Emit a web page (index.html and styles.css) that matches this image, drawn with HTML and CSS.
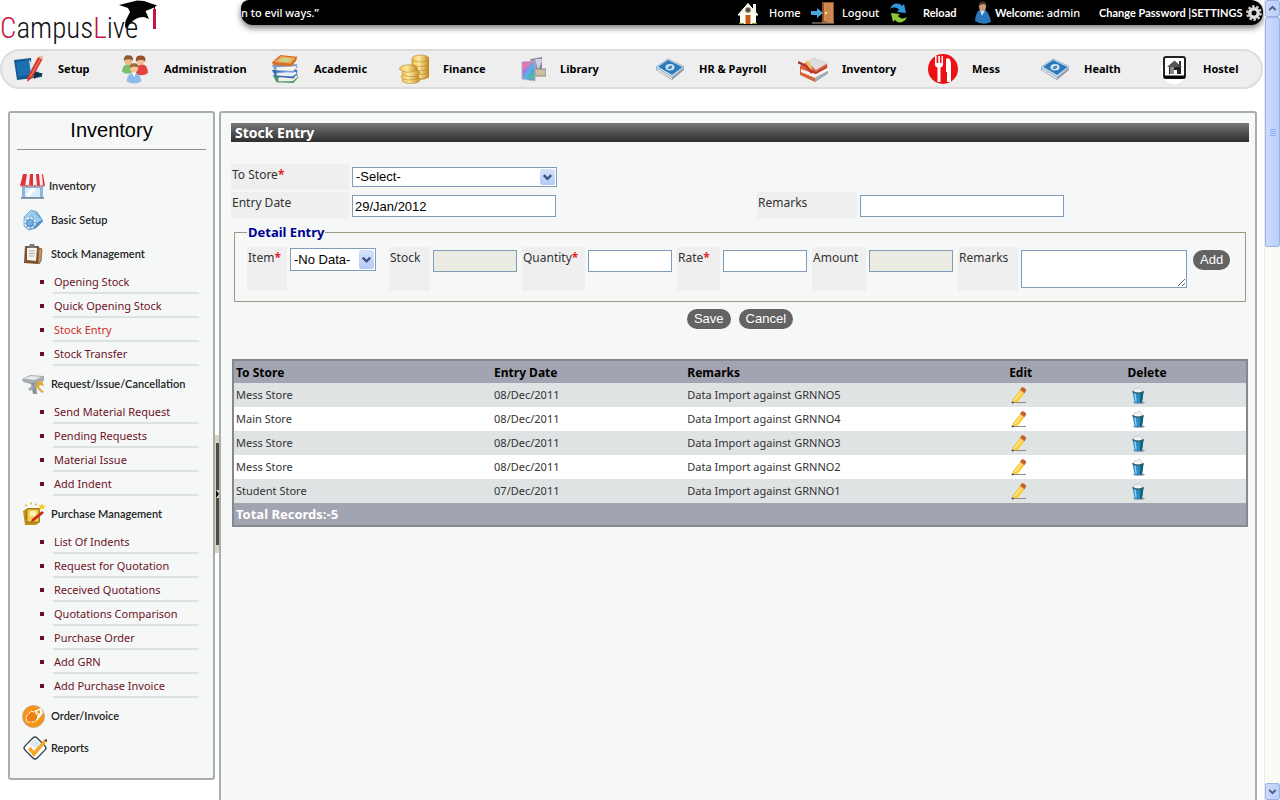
FILE: index.html
```html
<!DOCTYPE html>
<html lang="en">
<head>
<meta charset="utf-8">
<title>CampusLive - Stock Entry</title>
<link rel="stylesheet" href="styles.css">
</head>
<body>
<svg class="defs" aria-hidden="true">
  <defs>
    <linearGradient id="gold" x1="0" x2="1" y1="0" y2="0"><stop offset="0" stop-color="#f2c24a"/><stop offset=".4" stop-color="#ffe9a0"/><stop offset="1" stop-color="#c58a1c"/></linearGradient>
    <linearGradient id="rainbow" x1="0" x2="1" y1="0" y2="1"><stop offset="0" stop-color="#ef4f9e"/><stop offset=".3" stop-color="#b76ae8"/><stop offset=".55" stop-color="#4fb8dd"/><stop offset=".8" stop-color="#5f7fe0"/><stop offset="1" stop-color="#b45fd8"/></linearGradient>
    <linearGradient id="water" x1="0" x2="1" y1="0" y2="1"><stop offset="0" stop-color="#cde5f7"/><stop offset=".5" stop-color="#6fb0e0"/><stop offset="1" stop-color="#2a6db0"/></linearGradient>
  </defs>
  <symbol id="i-cash" viewBox="0 0 30 22">
    <path d="M1 10 17 19.500 29 9.500 29 12 17 22 1 12z" fill="#8c9aa8"/>
    <path d="M1 9 13 1 29 8.500 17 18.500z" fill="#e9f3fa" stroke="#7ba4c4" stroke-width=".8"/>
    <path d="M3 8.800 13 2 27.500 9 17 17z" fill="#2e79b8"/>
    <ellipse cx="15" cy="9.300" rx="4.500" ry="3.200" fill="#cfe3f2"/>
    <path d="M12.500 11c.5-2 2-3.600 4-3.200 1.500.5.500 2-.5 3z" fill="#3f85bd"/>
    <path d="M2 11.500 17 20.500" stroke="#fff" stroke-width="1"/>
  </symbol>
  <symbol id="i-pencil" viewBox="0 0 16 18">
    <path d="M3 16.500h12" stroke="#8c8c8c" stroke-width="1"/>
    <path d="M2 13 9 4l4.500 3.200L7 15.500 1 17z" fill="#fbc93a"/>
    <path d="M4 14 11 5.200" stroke="#fff0a0" stroke-width="1.300"/>
    <path d="M9 4 10.500 1.600c1-1.200 5.600 1.300 4.500 3.200L13.500 7.200z" fill="#c4602a"/>
    <path d="M.8 15.200 3.600 16.700.8 17.600z" fill="#333"/>
  </symbol>
  <symbol id="i-bin" viewBox="0 0 14 18">
    <ellipse cx="8" cy="16.600" rx="6" ry="1.200" fill="#8a9aa0"/>
    <path d="M1.500 5.500h11l-1.500 11Q7 18 3.500 16.500z" fill="#2b8cc4"/>
    <path d="M9.500 6h3L11 16.500 9 17z" fill="#175c72"/>
    <path d="M4 7.500 5 15.500" stroke="#8fd0f2" stroke-width="1.500"/>
    <path d="M2 5.500 4 2.500 6 3 8 .8 10 3.500 12 5.500 9 7 5 7z" fill="#f2f4f5" stroke="#9aa" stroke-width=".5"/>
    <path d="M1.500 5.500Q7 8.800 12.500 5.500" fill="none" stroke="#1b5260" stroke-width="1.100"/>
  </symbol>
</svg>

<div class="app">
  <header class="header">
    <a class="logo" href="#" aria-label="CampusLive">
      <span class="logo-text"><b>C</b>ampus<b>L</b>ive</span>
      <svg class="logo-cap" viewBox="0 0 40 30" aria-hidden="true">
        <path d="M0 5 18 .5 25 1 38 5.500 34 8 26.500 11 30 19 25 17Q18 17 14 21 10 24 7 29 5 25 7 20L11 12 9 8z" fill="#050505"/>
        <path d="M35.500 6v4" stroke="#111" stroke-width="1"/>
        <path d="M35.500 9v20" stroke="#c21540" stroke-width="3"/>
      </svg>
    </a>
    <div class="topbar">
      <span class="quote">n to evil ways.”</span>
      <a class="top-link home" href="#">
        <svg width="20" height="22" viewBox="0 0 20 22" aria-hidden="true"><path d="M15 2h3v8h-3z" fill="#eee"/><path d="M2 11h16v11H2z" fill="#fffdf2"/><path d="M0 13 10 1.500 20 13z" fill="#fdf8e6" stroke="#fff" stroke-width="1"/><circle cx="10" cy="8" r="2.700" fill="#55483e" stroke="#b7a894"/><path d="M7.500 13h5v9h-5z" fill="#c65a1c"/><path d="M1 21.500h5M14 21.500h5" stroke="#6ea034"/></svg>
        <span>Home</span></a>
      <a class="top-link logout" href="#">
        <svg width="24" height="23" viewBox="0 0 24 23" aria-hidden="true"><path d="M11 1h12v21H11z" fill="#8f5228"/><path d="M13 2h9v20l-9-2z" fill="#d48b55"/><path d="M15 4h5v6h-5zM15 13h5v6h-5z" fill="#cb8450"/><circle cx="15" cy="12" r="1.200" fill="#f6e18a"/><path d="M0 10h6V7l6 5-6 5v-3H0z" fill="#4ba5de"/><path d="M1 22h22" stroke="#b9a28a"/></svg>
        <span>Logout</span></a>
      <a class="top-link reload" href="#">
        <svg width="17" height="20" viewBox="0 0 17 20" aria-hidden="true"><path d="M0 6C2 0 9-1 12 3l2-2 2 9-9-1 2-2C7 4 3 4 0 6z" fill="#3397dc"/><path d="M17 14c-2 6-9 7-12 3l-2 2-2-9 9 1-2 2c2 3 6 3 9 1z" fill="#8cc63c"/></svg>
        <span>Reload</span></a>
      <span class="welcome">
        <svg width="16" height="23" viewBox="0 0 16 23" aria-hidden="true"><path d="M0 20Q1 10 5 9l5 0Q14 11 16 21 8 25 0 20z" fill="#2c78bd"/><path d="M5 9 7 15 10 9z" fill="#cfe3f5"/><ellipse cx="7.500" cy="5.500" rx="3.500" ry="4.500" fill="#c99a78"/><path d="M3.500 5C3-1 12-1 11.500 5 9 2 7 3 3.500 5z" fill="#4a332a"/></svg>
        <span><strong>Welcome:</strong> admin</span></span>
      <span class="account"><span><a href="#">Change Password</a> |<a href="#">SETTINGS</a></span>
        <svg width="16" height="16" viewBox="0 0 16 16" aria-hidden="true"><circle cx="8" cy="8" r="6.700" fill="none" stroke="#c4c4c4" stroke-width="2.400" stroke-dasharray="2.600 1.600"/><circle cx="8" cy="8" r="4.200" fill="none" stroke="#dcdcdc" stroke-width="3.400"/></svg></span>
    </div>
  </header>

  <nav class="modules" aria-label="Modules">
    <a href="#"><svg viewBox="0 0 30 30" aria-hidden="true"><path d="M0 6 17 4 18 19 28 19v4L3 26z" fill="#15598f"/><path d="M2 8 16 6 17 20 4 23z" fill="#1c70b0"/><path d="M15 6 27 18 20 24 17 20z" fill="#d7e3ef"/><path d="M18 16 29 20 20 25z" fill="#12314d"/><path d="M24 3 28.500 5.500 18 24 13 28 14 22z" fill="#d8392b"/><path d="M24 3Q27 0 29.500 3L28.500 5.500z" fill="#eeb9a0"/><path d="M26 5.500 16 23" stroke="#f48770" stroke-width="1"/></svg>Setup</a>
    <a href="#"><svg viewBox="0 0 30 32" aria-hidden="true"><path d="M1 19Q2 11 7 11q5 0 6 8-6 4-12 0z" fill="#7cbf6a"/><circle cx="8" cy="7" r="4.500" fill="#e9b98c"/><path d="M3 7Q3 1 8 1.500 13 1 13 7 9 4 3 7z" fill="#8a5a32"/><path d="M16 21Q17 11 22 11q6 0 7 9-6 5-13 1z" fill="#e2433e"/><circle cx="21" cy="7" r="4.500" fill="#f0c096"/><path d="M16 8Q15 1 21 1.500 27 1 26 8 22 4 16 8z" fill="#9a4f28"/><path d="M6 29Q7 20 14 20q6 0 8 9-8 5-16 0z" fill="#8fbbea"/><path d="M12 20l2 5 2-5z" fill="#fff"/><circle cx="14" cy="15" r="4.600" fill="#f3c79e"/><path d="M9 15Q9 9.500 14 10q5-.5 5 5-4-3-10 0z" fill="#a46a38"/></svg>Administration</a>
    <a href="#"><svg viewBox="0 0 30 32" aria-hidden="true"><path d="M2 23 6 30 24 31 29 25 28 21 8 21z" fill="#46976a"/><path d="M8 25l20-2v2l-5 4-15 0z" fill="#f2efe6"/><path d="M1 17 5 24 24 26 28 20 28 17 8 16z" fill="#3267b2"/><path d="M6 20l21-1v2l-4 3-17-1z" fill="#e6eef6"/><path d="M1 12 5 18 24 20 28 14 28 11 8 10z" fill="#7e9fd0"/><path d="M6 14l21-1v2l-4 3-17-1z" fill="#f5f5ef"/><path d="M1 9 10 1 28 3 27 7 22 13 3 12z" fill="#d5702a"/><path d="M4 8.500 11 2.500 26 4 21 10z" fill="#f3a85b"/><path d="M8 7.500 13 4 22 5 18.500 8.500z" fill="#b8dc8b"/></svg>Academic</a>
    <a href="#"><svg viewBox="0 0 30 30" aria-hidden="true"><g stroke="#b5822a" stroke-width=".6" fill="url(#gold)"><path d="M13 5v18q8 5 17 0V4z"/><ellipse cx="21.500" cy="21" rx="8.500" ry="3.500"/><ellipse cx="21.500" cy="17" rx="8.500" ry="3.500"/><ellipse cx="21.500" cy="13" rx="8.500" ry="3.500"/><ellipse cx="21.500" cy="9" rx="8.500" ry="3.500"/><ellipse cx="21.500" cy="4.500" rx="8.500" ry="3.500"/><ellipse cx="12" cy="26" rx="9" ry="3.500"/><ellipse cx="11" cy="22.500" rx="9" ry="3.500"/><ellipse cx="12" cy="19" rx="9" ry="3.500"/><ellipse cx="9.500" cy="14.500" rx="9" ry="3.700"/></g></svg>Finance</a>
    <a href="#"><svg viewBox="0 0 30 30" aria-hidden="true"><path d="M15 5 26 3v15l-7 3z" fill="#8e86a6"/><path d="M19 5 27 5 22 16z" fill="#d5cfe6"/><path d="M15 5v12" stroke="#9b6c5a"/><path d="M19 15h11v7H19z" fill="#cdbf9f" stroke="#8d8575"/><path d="M6 8 19 7v20L6 25z" fill="url(#rainbow)" stroke="#b9b4c8"/><path d="M7 9 18 8 7 16z" fill="#f38a8a" opacity=".6"/><path d="M11 24 18 18v8z" fill="#4bd08a" opacity=".7"/></svg>Library</a>
    <a href="#"><svg viewBox="0 0 30 30" aria-hidden="true"><use href="#i-cash" y="4" width="30" height="22"/></svg>HR &amp; Payroll</a>
    <a href="#"><svg viewBox="0 0 30 30" aria-hidden="true"><path d="M2 12 16 4 29 9 30 19 17 28 2 21z" fill="#d9643e"/><path d="M9 8 16 4 30 9 18 16z" fill="#dedede"/><path d="M3 15 17 20 30 13v4L17 24 3 18z" fill="#f6f3f0"/><path d="M11 15 18 18 29 12v2l-11 6-7-3z" fill="#b73a32"/><path d="M8 6q5 1 6 10-6-1-6-10z" fill="#f5c25c"/><path d="M0 8 8 12 14 19" fill="none" stroke="#b63431" stroke-width="2.500"/><path d="M17 24v3.500l12-7v-3z" fill="#9aafc0"/></svg>Inventory</a>
    <a href="#"><svg viewBox="0 0 30 30" aria-hidden="true"><circle cx="15" cy="15" r="15" fill="#ed1115"/><path d="M7 2v8q0 3 2.500 3.500V28h3V13.500Q15 13 15 10V2h-1.500v7h-1.600V2h-1.600v7H8.600V2z" fill="#fff"/><path d="M18 5q5-3 5 7v16h-4V18h-1z" fill="#fff"/></svg>Mess</a>
    <a href="#"><svg viewBox="0 0 30 30" aria-hidden="true"><use href="#i-cash" y="4" width="30" height="22"/></svg>Health</a>
    <a href="#"><svg viewBox="0 0 30 30" aria-hidden="true"><circle cx="15" cy="17" r="13" fill="#fff"/><rect x="5" y="3" width="21" height="21" rx="2" fill="#fff" stroke="#222" stroke-width="2"/><path d="M5 23h21" stroke="#000" stroke-width="3"/><path d="M8 13 15.500 6.500 23 13z" fill="#555"/><path d="M20 7h2v5h-2z" fill="#333"/><path d="M10 13h12v7h-4v-4h-3v4h-5z" fill="#222"/><path d="M11 13h4v7h-4z" fill="#888"/></svg>Hostel</a>
  </nav>

  <div class="workspace">
    <aside class="sidebar">
      <h1>Inventory</h1>
      <div class="menu">
        <a class="menu-head" href="#"><svg width="26" height="26" viewBox="0 0 26 26" aria-hidden="true"><path d="M2 12h21v13H2z" fill="#8fb4dc"/><path d="M5 15h15v9H5z" fill="#d7ecfa"/><path d="M5 22 12 15h5l-8 9z" fill="#fff"/><path d="M1 25h23" stroke="#6a7f99" stroke-width="1.500"/><path d="M3 1h20l2 12H0z" fill="#f5f0f0"/><path d="M3 1h4L5 13H0zM10 1h3v12H9zM16 1h3l1 12h-3zM22 1h1l2 12h-2z" fill="#e0303c"/><path d="M0 12q2 4 4.500 0 2 4 4.500 0 2 4 4 0 2 4 4 0 2 4 4 0 2 4 4 0z" fill="#e2656c"/></svg><span>Inventory</span></a>
        <a class="menu-head inset" href="#"><svg width="22" height="22" viewBox="0 0 22 22" aria-hidden="true"><path d="M2 8 9 1 15 3 21 12 14 19 7 21 2 17z" fill="url(#water)" stroke="#5b93c4" stroke-width=".7"/><path d="M9 2 20 11l-6 3z" fill="#9bcdf0"/><circle cx="8" cy="14" r="4" fill="none" stroke="#e4f2fb" stroke-width="3.500" stroke-dasharray="2 1.100"/><circle cx="8" cy="14" r="3.200" fill="none" stroke="#5c8fc0" stroke-width="1.500"/></svg><span>Basic Setup</span></a>
        <a class="menu-head inset" href="#"><svg width="22" height="22" viewBox="0 0 22 22" aria-hidden="true"><path d="M3 3 17 3 16 21 2 20z" fill="#7e5231"/><path d="M5 5h10l-1 13-9-1z" fill="#f7f3e8"/><path d="M8 1h4l2 4H6z" fill="#767a80"/><path d="M7 8h6M7 10.500h6M7 13h5" stroke="#a7b0ba"/><path d="M17 5 20 6 19 18 17 21 16 18z" fill="#c99953" stroke="#6b482e" stroke-width=".7"/></svg><span>Stock Management</span></a>
        <ul>
          <li><a href="#">Opening Stock</a></li>
          <li><a href="#">Quick Opening Stock</a></li>
          <li><a class="current" href="#" aria-current="page">Stock Entry</a></li>
          <li><a href="#">Stock Transfer</a></li>
        </ul>
        <a class="menu-head inset" href="#"><svg width="24" height="22" viewBox="0 0 24 22" aria-hidden="true"><path d="M0 6 8 2 22 3 22 8 12 12 1 9z" fill="#a8abb0"/><path d="M2 5.500 9 3 20 4 12 7z" fill="#e8e9eb"/><path d="M9 10h5l1 11h-4z" fill="#8c9098"/><path d="M6 16 17 8l2 2-11 8z" fill="#9da1a8"/><path d="M15 9q4-3 6 1l1 3-4-1-1 2 5 5-2 1-6-6z" fill="#e0ad3a"/></svg><span>Request/Issue/Cancellation</span></a>
        <ul>
          <li><a href="#">Send Material Request</a></li>
          <li><a href="#">Pending Requests</a></li>
          <li><a href="#">Material Issue</a></li>
          <li><a href="#">Add Indent</a></li>
        </ul>
        <a class="menu-head inset" href="#"><svg width="24" height="24" viewBox="0 0 24 24" aria-hidden="true"><path d="M1 9 6 6h12v14l-4 3H3z" fill="#c28f19"/><path d="M5 7h12v13H5z" fill="#f6cf4c" stroke="#7b5a10" stroke-width=".7"/><path d="M8 9h6v5H8z" fill="#fff3c0"/><path d="M20 9 22 11 12 19 9 20 10 17z" fill="#c92e22"/><path d="M20 1l1 2.500h3L22 5l.5 3L20 6.500 17.500 8 18 5 16 3.500h3z" fill="#f8c92a"/><path d="M4 2l1 1.500L4 5 3 3.500zM9 0l1 1.500L9 3 8 1.500zM14 1l1 1.500L14 4l-1-1.500z" fill="#e4b31d"/></svg><span>Purchase Management</span></a>
        <ul>
          <li><a href="#">List Of Indents</a></li>
          <li><a href="#">Request for Quotation</a></li>
          <li><a href="#">Received Quotations</a></li>
          <li><a href="#">Quotations Comparison</a></li>
          <li><a href="#">Purchase Order</a></li>
          <li><a href="#">Add GRN</a></li>
          <li><a href="#">Add Purchase Invoice</a></li>
        </ul>
        <a class="menu-head inset" href="#"><svg width="23" height="23" viewBox="0 0 23 23" aria-hidden="true"><circle cx="11.500" cy="11.500" r="11" fill="#f79414" stroke="#b9aa98" stroke-width=".8"/><path d="M4 12 9 6 14 8 16 12 13 17 5 17z" fill="#ee7f12" stroke="#fff" stroke-dasharray="3 1"/><path d="M12 6 19 3 21 8 15 16 16 9z" fill="#fff"/><path d="M14 7 18 5 18 9z" fill="#f79414"/></svg><span>Order/Invoice</span></a>
        <a class="menu-head last inset" href="#"><svg width="26" height="26" viewBox="0 0 26 26" aria-hidden="true"><rect x="4.500" y="4.500" width="17" height="17" rx="3" transform="rotate(45 13 13)" fill="#fff" stroke="#34404a" stroke-width="1.400"/><path d="M8 9 13 4 19 9 14 14z" fill="#dbe6ef"/><path d="M6 14 9 12 12 16 22 5 25 6 12 22z" fill="#f6a623"/><path d="M22 5 25 4 25 7" fill="#444"/></svg><span>Reports</span></a>
      </div>
    </aside>

    <div class="splitter"><button type="button" aria-label="Collapse side menu"><svg width="3" height="8" viewBox="0 0 3 8" aria-hidden="true"><path d="M0 0h3v8H0z" fill="#d9d5c3"/><path d="M0 0 3 4 0 8z" fill="#000"/></svg></button></div>

    <main class="content">
      <h2>Stock Entry</h2>
      <form>
        <div class="form-grid">
          <label for="store">To Store<em>*</em></label>
          <div class="cell"><span class="select store"><select id="store"><option>-Select-</option></select><svg viewBox="0 0 16 16" aria-hidden="true"><path d="M4 6 8 10 12 6" fill="none" stroke="#3e5583" stroke-width="2.600"/></svg></span></div>
          <label class="row2" for="date">Entry Date</label>
          <div class="cell row2"><input id="date" type="text" value="29/Jan/2012"></div>
          <label class="row2" for="remarks">Remarks</label>
          <div class="cell row2"><input id="remarks" type="text"></div>
        </div>

        <fieldset>
          <legend>Detail Entry</legend>
          <div class="detail">
            <label class="w-item" for="item">Item<em>*</em></label>
            <span class="select item"><select id="item"><option>-No Data-</option></select><svg viewBox="0 0 16 16" aria-hidden="true"><path d="M4 6 8 10 12 6" fill="none" stroke="#3e5583" stroke-width="2.600"/></svg></span>
            <label class="w-stock" for="stock">Stock</label><input id="stock" type="text" disabled>
            <label class="w-qty" for="qty">Quantity<em>*</em></label><input id="qty" type="text">
            <label class="w-rate" for="rate">Rate<em>*</em></label><input id="rate" type="text">
            <label class="w-amount" for="amount">Amount</label><input id="amount" type="text" disabled>
            <label class="w-remarks" for="line-remarks">Remarks</label><textarea id="line-remarks"></textarea>
            <button class="pill" type="button">Add</button>
          </div>
        </fieldset>
        <div class="actions"><button class="pill" type="button">Save</button><button class="pill" type="button">Cancel</button></div>
      </form>

      <table>
        <thead><tr><th class="c-store">To Store</th><th class="c-date">Entry Date</th><th class="c-remarks">Remarks</th><th class="c-edit">Edit</th><th>Delete</th></tr></thead>
        <tbody>
          <tr><td>Mess Store</td><td>08/Dec/2011</td><td>Data Import against GRNNO5</td><td><button type="button" aria-label="Edit"><svg><use href="#i-pencil"/></svg></button></td><td><button type="button" aria-label="Delete"><svg><use href="#i-bin"/></svg></button></td></tr>
          <tr><td>Main Store</td><td>08/Dec/2011</td><td>Data Import against GRNNO4</td><td><button type="button" aria-label="Edit"><svg><use href="#i-pencil"/></svg></button></td><td><button type="button" aria-label="Delete"><svg><use href="#i-bin"/></svg></button></td></tr>
          <tr><td>Mess Store</td><td>08/Dec/2011</td><td>Data Import against GRNNO3</td><td><button type="button" aria-label="Edit"><svg><use href="#i-pencil"/></svg></button></td><td><button type="button" aria-label="Delete"><svg><use href="#i-bin"/></svg></button></td></tr>
          <tr><td>Mess Store</td><td>08/Dec/2011</td><td>Data Import against GRNNO2</td><td><button type="button" aria-label="Edit"><svg><use href="#i-pencil"/></svg></button></td><td><button type="button" aria-label="Delete"><svg><use href="#i-bin"/></svg></button></td></tr>
          <tr><td>Student Store</td><td>07/Dec/2011</td><td>Data Import against GRNNO1</td><td><button type="button" aria-label="Edit"><svg><use href="#i-pencil"/></svg></button></td><td><button type="button" aria-label="Delete"><svg><use href="#i-bin"/></svg></button></td></tr>
        </tbody>
        <tfoot><tr><td colspan="5">Total Records:-5</td></tr></tfoot>
      </table>
    </main>
  </div>
</div>

<div class="scrollbar" aria-hidden="true">
  <span class="sb-button"><svg viewBox="0 0 16 16"><path d="M4 10 8 6 12 10" fill="none" stroke="#4d6185" stroke-width="2.600"/></svg></span>
  <span class="sb-thumb"><i></i><i></i><i></i><i></i></span>
  <span class="sb-button sb-down"><svg viewBox="0 0 16 16"><path d="M4 6 8 10 12 6" fill="none" stroke="#4d6185" stroke-width="2.600"/></svg></span>
</div>
</body>
</html>
```

FILE: styles.css
```css
* { box-sizing: border-box; }

body {
  margin: 0;
  display: flex;
  min-height: 100vh;
  background: #fff;
  color: #333;
  font: 11px/14px "Noto Sans", "Open Sans", sans-serif;
}

a { color: inherit; text-decoration: none; }
button { font: inherit; cursor: pointer; }
.defs { position: absolute; width: 0; height: 0; }

.app { flex: 1; min-width: 0; display: flex; flex-direction: column; }

/* Header */
.header { display: flex; align-items: flex-start; height: 49px; padding-right: 1px; }
.logo { position: relative; width: 241px; height: 49px; color: #111; }
.logo-text {
  font: 300 29px/56px "Roboto Condensed", "Open Sans Condensed", "Liberation Sans Narrow", Lato, sans-serif;
}
.logo-text b { color: #c4143c; font-weight: 300; }
.logo-cap { position: absolute; left: 119px; top: 0; width: 40px; height: 30px; }

.topbar {
  flex: 1;
  display: flex;
  align-items: center;
  height: 25px;
  padding-right: 1px;
  border-radius: 8px 12px 12px 12px;
  background: #000;
  box-shadow: 0 3px 6px #777;
  color: #fff;
  white-space: nowrap;
}
.quote { flex: 1; overflow: hidden; font-weight: 500; }
.topbar svg { flex: none; }
.top-link, .welcome { display: flex; align-items: center; font-weight: 500; }
.home { gap: 11px; width: 73px; }
.logout { gap: 7px; width: 79px; }
.reload { gap: 16px; width: 85px; font-family: Lato, sans-serif; font-weight: 700; }
.welcome { gap: 4px; width: 124px; }
.welcome strong { font-family: Lato, sans-serif; font-size: 11px; }
.account {
  display: flex;
  align-items: center;
  justify-content: space-between;
  width: 163px;
  font-family: Lato, sans-serif;
  font-weight: 700;
}

/* Module bar */
.modules {
  display: grid;
  grid-template-columns: 106fr 150fr 129fr 117fr 139fr 143fr 130fr 112fr 119fr 90fr;
  align-items: center;
  height: 40px;
  padding: 0 12px;
  border: 2px solid #dcdcdc;
  border-radius: 20px;
  background: #eee;
  margin-right: 1px;
}
.modules a {
  display: flex;
  align-items: center;
  gap: 14px;
  color: #000;
  font-weight: 700;
  white-space: nowrap;
}
.modules svg { width: 30px; height: 30px; flex: none; }

/* Workspace */
.workspace { flex: 1; display: flex; align-items: stretch; padding: 22px 7px 0 8px; }

.sidebar {
  align-self: flex-start;
  width: 207px;
  padding: 0 7px 14px;
  border: 2px solid #a9adab;
  border-radius: 3px;
  background: #f5f8f7;
}
.sidebar h1 {
  margin: 0;
  padding: 5px 0 7px;
  border-bottom: 1px solid #8f8f8f;
  color: #000;
  font: 400 20px/24px "Liberation Sans", sans-serif;
  text-align: center;
}
.menu { padding-top: 18px; }
.menu-head {
  display: flex;
  align-items: center;
  gap: 3px;
  height: 34px;
  padding: 2px 0 0 3px;
  color: #222;
  font-family: Lato, sans-serif;
  font-weight: 600;
  white-space: nowrap;
}
.menu-head.inset { padding-left: 5px; }
.menu-head.last { height: 32px; padding-top: 0; }
.menu-head.inset span { width: 155px; margin-left: auto; }
.menu-head svg { flex: none; }
.menu-head.inset svg { margin-right: -4px; }
.menu ul { margin: 0; padding: 0 7px 0 36px; list-style: none; }
.menu li {
  position: relative;
  height: 24px;
  padding: 1px 0 0 1px;
  border-bottom: 2px solid #dce2e2;
  color: #6e1226;
  line-height: 21px;
  white-space: nowrap;
}
.menu li::before {
  content: "";
  position: absolute;
  left: -13px;
  top: 10px;
  width: 4px;
  height: 4px;
  background: #6a1024;
}
.menu .current { color: #d22a2a; }

.splitter { display: flex; width: 4px; padding-top: 324px; }
.splitter button {
  display: flex;
  align-items: center;
  width: 4px;
  height: 118px;
  padding: 0;
  border: solid #d9d5c3;
  border-width: 8px 0 8px 1px;
  background: #4c4b45;
}
.splitter svg { flex: none; }

.content {
  flex: 1;
  min-width: 0;
  padding: 10px 6px 0 10px;
  border: 2px solid #a9adab;
  border-bottom: 0;
  border-radius: 3px 3px 0 0;
  background: #f5f8f7;
}
.content h2 {
  margin: 0;
  padding: 0 4px;
  background: linear-gradient(#777, #2e2e2e);
  color: #fff;
  font-size: 14px;
  font-weight: 700;
  line-height: 19px;
}

/* Form */
.form-grid {
  display: grid;
  grid-template-columns: 118px 404fr 100px 390fr;
  grid-template-rows: 26px 27px;
  gap: 2px;
  margin-top: 22px;
}
.form-grid label { padding: 4px 1px; background: #efefef; font-size: 12px; }
.row2 { grid-row: 2; }
.cell { padding: 3px 1px 0; }
label em { color: #e8262a; font-style: normal; font-weight: 700; }
input, textarea, select {
  border: 1px solid #7f9db9;
  border-radius: 0;
  background: #fff;
  color: #000;
  font: 13px/16px "Liberation Sans", sans-serif;
}
input { width: 204px; height: 22px; padding: 2px; }
input:disabled { background: #ebebe4; }
.select { position: relative; display: inline-flex; }
.select select { width: 100%; padding: 0 3px; appearance: none; }
.select svg {
  position: absolute;
  right: 2px;
  top: 2px;
  width: 15px;
  height: calc(100% - 4px);
  border-radius: 2px;
  background: linear-gradient(#d5e2fd, #b4caf6);
  pointer-events: none;
}
.store { width: 205px; height: 20px; }

fieldset {
  min-width: 0;
  margin: 6px 3px 0;
  padding: 8px 9px 10px 12px;
  border: 1px solid #9d9b84;
}
legend { padding: 0 1px; color: #000096; font-size: 13px; font-weight: 700; line-height: 14px; }
.detail { display: flex; align-items: flex-start; }
.detail label { flex: none; height: 44px; margin-right: 3px; padding: 4px 1px; background: #efefef; font-size: 12px; }
.detail input { width: 84px; margin: 3px 5px 0 0; }
.detail .w-item { width: 40px; }
.detail .w-stock { width: 41px; }
.detail .w-qty { width: 63px; }
.detail .w-rate { width: 43px; }
.detail .w-amount { width: 54px; }
.detail .w-remarks { width: 60px; }
.item { width: 86px; height: 23px; margin: 1px 13px 0 0; }
textarea { flex: 1; min-width: 60px; max-width: 166px; height: 38px; margin: 3px 6px 0 0; padding: 2px; }
.pill {
  height: 20px;
  padding: 0 7px;
  border: 0;
  border-radius: 10px;
  background: #636363;
  color: #fff;
  font: 13px/20px "Liberation Sans", sans-serif;
}
.detail .pill { margin-top: 3px; }
.actions { display: flex; justify-content: center; gap: 8px; margin-top: 7px; }

/* Records */
table {
  width: calc(100% - 2px);
  margin: 30px 1px 0;
  border: 2px solid #87888c;
  border-collapse: separate;
  border-spacing: 0;
  table-layout: fixed;
}
th, td { height: 24px; padding: 0 2px; text-align: left; }
th { height: 22px; padding-top: 2px; background: #a3a4b1; color: #000; font-size: 12px; font-weight: 700; }
tbody tr { background: #fff; }
tbody tr:nth-child(odd) { background: #dfe3e4; }
tfoot td { height: 22px; background: #a3a4b1; color: #fff; font-size: 13px; font-weight: 700; }
.c-store { width: 25.500%; }
.c-date { width: 19.100%; }
.c-remarks { width: 31.800%; }
.c-edit { width: 11.700%; }
td button { display: flex; margin: 0 0 0 2px; padding: 0; border: 0; background: none; }
td button svg { width: 16px; height: 18px; }

/* Scroll bar */
.scrollbar {
  position: sticky;
  top: 0;
  display: flex;
  flex-direction: column;
  width: 16px;
  height: 100vh;
  border-left: 1px solid #eeede5;
  background: #fbfbf6;
}
.sb-button, .sb-thumb { border: 1px solid #9bb4e6; border-radius: 2px; background: linear-gradient(90deg, #cbdafc, #bccffa); }
.sb-button { height: 17px; }
.sb-button svg { display: block; width: 13px; height: 15px; }
.sb-thumb { display: flex; flex-direction: column; align-items: center; justify-content: center; gap: 1px; height: 230px; }
.sb-thumb i { width: 6px; height: 1px; background: #8cb0f8; }
.sb-down { margin-top: auto; }
```
